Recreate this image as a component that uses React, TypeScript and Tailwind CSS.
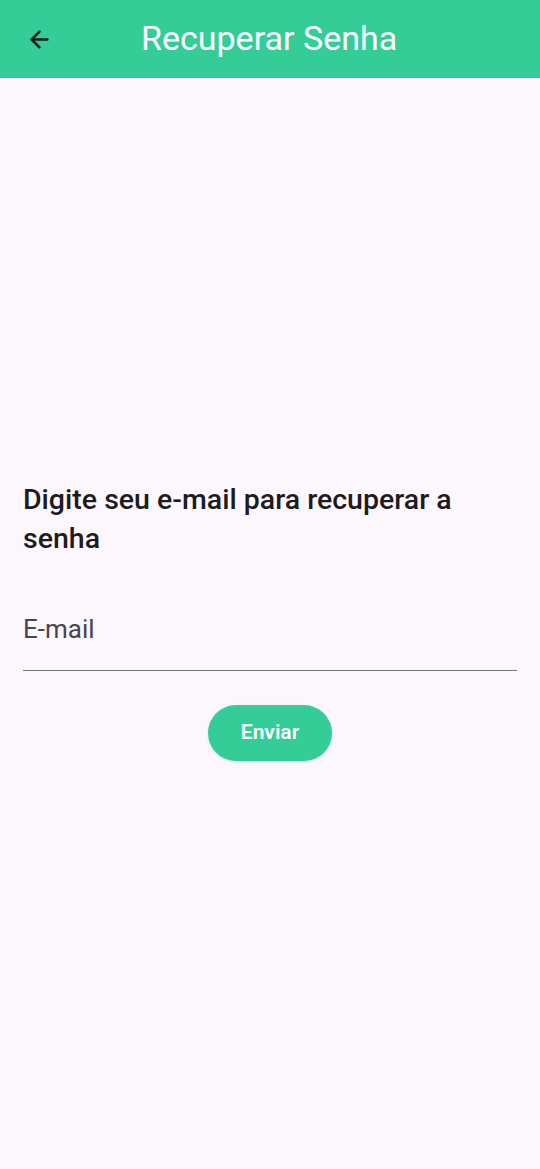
import React from "react";
import { ArrowLeft } from "lucide-react";

export default function App() {
  return (
    <div className="min-h-[1169px] w-[540px] flex flex-col bg-[#fcf7fc] font-['Roboto',sans-serif]">
      {/* App bar */}
      <header className="h-[78px] bg-[#34cd98] flex items-center px-[26px] shrink-0">
        <ArrowLeft size={27} strokeWidth={2.2} className="text-[#1d1b20]" />
        <h1 className="ml-[88px] text-[34px] text-white leading-none pb-[2px]">Recuperar Senha</h1>
      </header>

      {/* Form */}
      <main className="flex-1 flex flex-col justify-center px-[23px] pb-[6px]">
        <p className="text-[28.5px] font-medium text-[#1d1b20] leading-[39px]">
          Digite seu e-mail para recuperar a senha
        </p>
        <div className="mt-[53px] border-b border-[#79747e] pb-[23px]">
          <input
            type="email"
            placeholder="E-mail"
            className="w-full bg-transparent text-[26px] leading-[36px] text-[#49454f] placeholder-[#49454f] outline-none"
          />
        </div>
        <div className="flex justify-center mt-[34px]">
          <button className="w-[124px] h-[56px] rounded-full bg-[#34cd98] text-white text-[21px] font-semibold shadow-sm">
            Enviar
          </button>
        </div>
      </main>
    </div>
  );
}
